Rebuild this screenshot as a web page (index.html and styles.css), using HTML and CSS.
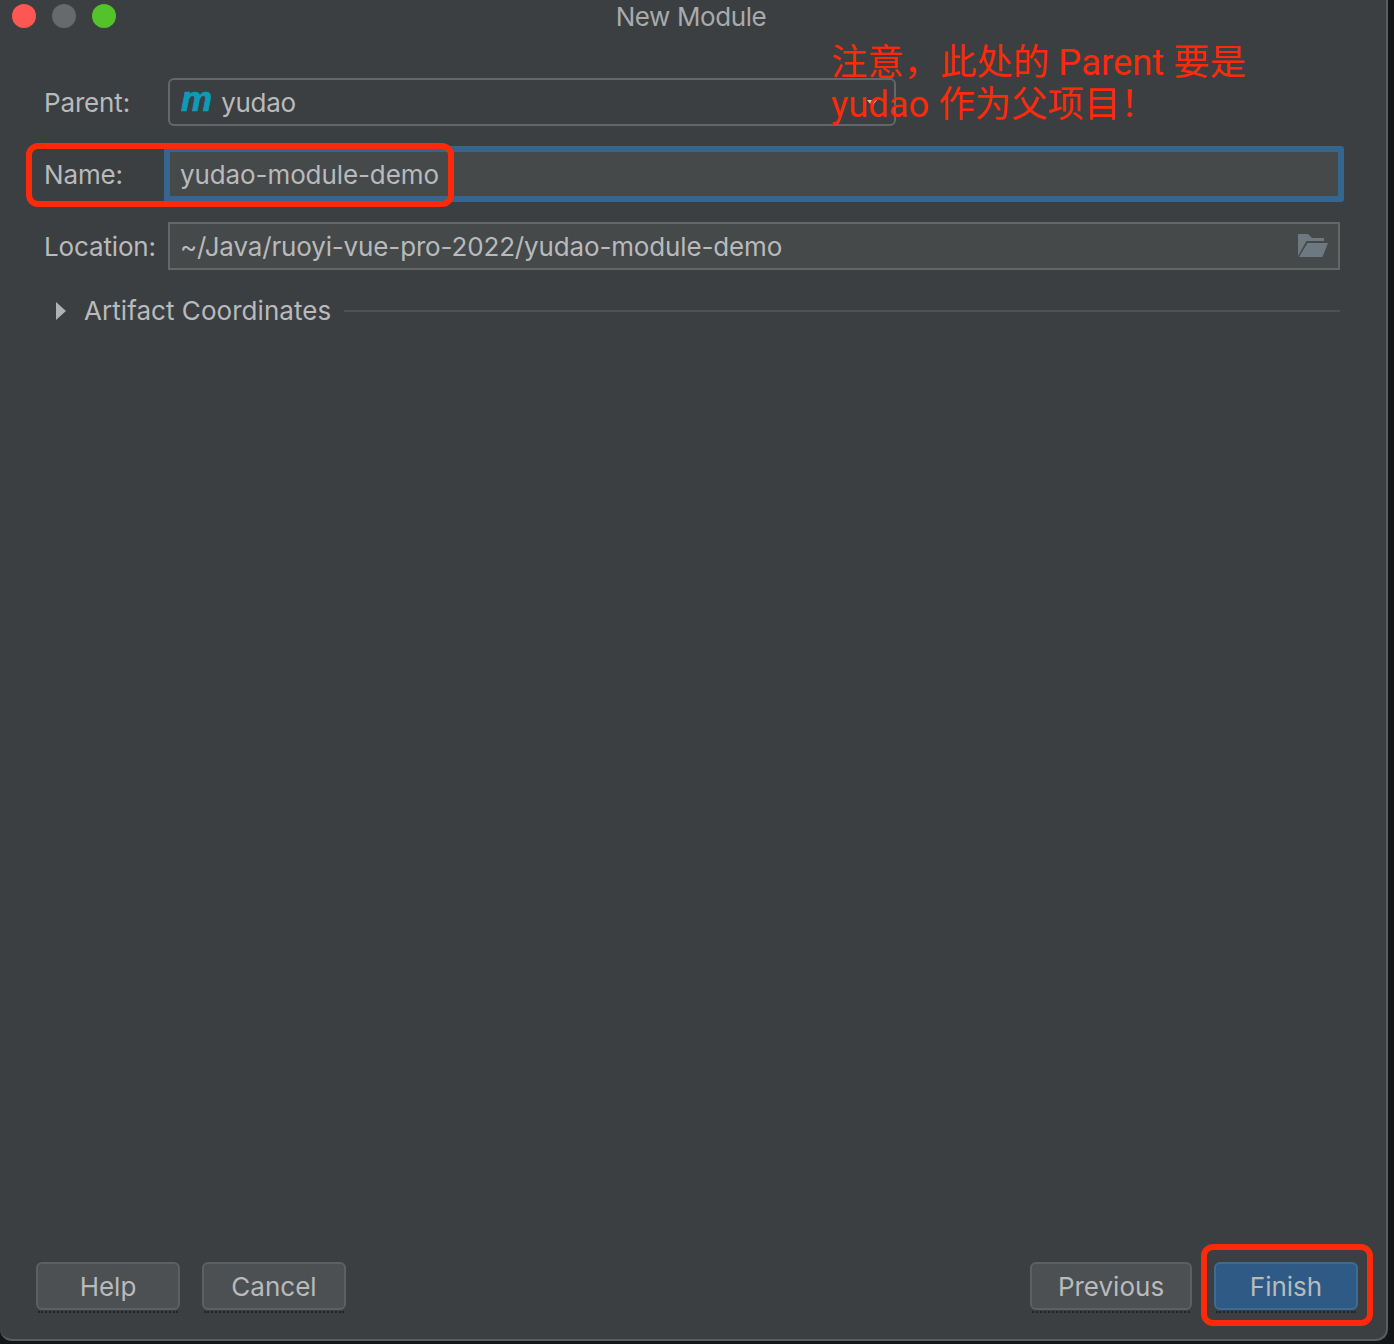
FILE: index.html
```html
<!DOCTYPE html>
<html lang="en">
<head>
<meta charset="UTF-8">
<title>New Module</title>
<link rel="stylesheet" href="styles.css">
</head>
<body>
<div class="window">
    <div class="titlebar">
        <div class="lights">
            <span class="light red"></span>
            <span class="light grey"></span>
            <span class="light green"></span>
        </div>
        <div class="title">New Module</div>
    </div>

    <div class="form">
        <div class="row">
            <label class="label">Parent:</label>
            <div class="select">
                <span class="maven">m</span>
                <span class="value tight">yudao</span>
                <svg class="caret" width="12" height="8" viewBox="0 0 12 8"><path d="M1 1h10L6 7z" fill="#c4c6c8"/></svg>
            </div>
        </div>
        <div class="row">
            <label class="label">Name:</label>
            <div class="field focused"><span class="value">yudao-module-demo</span></div>
        </div>
        <div class="row">
            <label class="label">Location:</label>
            <div class="field">
                <span class="value path">~/Java/ruoyi-vue-pro-2022/yudao-module-demo</span>
                <svg class="folder" width="30" height="24" viewBox="0 0 30 24"><path d="M0 0h10l4 4h12v3H8.500L0 22z" fill="#6e7880"/><path d="M9.500 9H30l-5.500 14H1z" fill="#6e7880"/></svg>
            </div>
        </div>
        <div class="section">
            <svg class="arrow" width="10" height="18" viewBox="0 0 10 18"><path d="M0 0l10 9-10 9z" fill="#afb1b3"/></svg>
            <span class="section-name">Artifact Coordinates</span>
            <span class="section-line"></span>
        </div>
    </div>

    <div class="footer">
        <div class="btn-group">
            <button class="btn">Help</button>
            <button class="btn">Cancel</button>
        </div>
        <div class="btn-group">
            <button class="btn prev">Previous</button>
            <button class="btn primary">Finish</button>
        </div>
    </div>

    <!-- annotations drawn on top of the screenshot -->
    <div class="note">注意，此处的 Parent 要是<br>yudao 作为父项目！</div>
    <div class="mark mark-name"></div>
    <div class="mark mark-finish"></div>
</div>
</body>
</html>
```

FILE: styles.css
```css
html, body {
    margin: 0;
    height: 100%;
    background: #141516;
}

body {
    font-family: Inter, "Noto Sans CJK SC", sans-serif;
    font-size: 26px;
    color: #b8babc;
    overflow: hidden;
}

.window {
    position: relative;
    box-sizing: border-box;
    width: 1388px;
    height: 1341px;
    background: #3c3f41;
    border-right: 2px solid #5a5c5e;
    border-bottom: 2px solid #5a5c5e;
    border-radius: 0 0 12px 12px;
    display: flex;
    flex-direction: column;
}

.titlebar {
    position: relative;
    height: 34px;
    display: flex;
    align-items: center;
    justify-content: center;
}

.lights {
    position: absolute;
    left: 12px;
    top: 4px;
    display: flex;
    gap: 16px;
}

.light {
    width: 24px;
    height: 24px;
    border-radius: 50%;
}

.red { background: #fc5753; }
.grey { background: #68696b; }
.green { background: #53c22b; }

.title {
    color: #a8aaac;
    letter-spacing: -0.4px;
    margin: -2px 0 0 -4px;
}

.form {
    flex-grow: 1;
    padding: 44px 46px 0 44px;
    display: flex;
    flex-direction: column;
    gap: 24px;
}

.row {
    display: flex;
    align-items: center;
    height: 48px;
}

.label {
    width: 124px;
    flex-shrink: 0;
    letter-spacing: -0.15px;
}

.select, .field {
    box-sizing: border-box;
    height: 48px;
    border: 2px solid #646667;
    padding: 0 10px;
    display: flex;
    align-items: center;
}

.select {
    width: 728px;
    border-radius: 6px;
    position: relative;
}

.maven {
    font-family: "Liberation Sans", sans-serif;
    font-style: italic;
    font-weight: bold;
    font-size: 35px;
    line-height: 1;
    color: #0d9bb8;
    -webkit-text-stroke: 0.7px #0d9bb8;
    margin: -7px 9px 0 1px;
}

.tight {
    letter-spacing: -0.3px;
}

.caret {
    position: absolute;
    right: 16px;
    top: 19px;
}

.field {
    flex-grow: 1;
    background: #45494a;
    justify-content: space-between;
}

.field.focused {
    border: 6px solid #34668f;
    border-radius: 3px;
    margin: 0 -4px;
    height: 56px;
    padding-left: 10px;
    letter-spacing: -0.1px;
}

.path {
    letter-spacing: -0.15px;
}

.folder {
    margin: 0;
}

.section {
    display: flex;
    align-items: center;
    height: 36px;
    margin-top: -1px;
    padding-left: 12px;
}

.arrow {
    margin-right: 18px;
}

.section-name {
    letter-spacing: 0.05px;
    margin-top: -2px;
}

.section-line {
    flex-grow: 1;
    height: 2px;
    background: #4f5153;
    margin-left: 13px;
}

.footer {
    display: flex;
    justify-content: space-between;
    padding: 0 28px 29px 36px;
}

.btn-group {
    display: flex;
    gap: 22px;
}

.btn {
    position: relative;
    box-sizing: border-box;
    width: 144px;
    height: 48px;
    font: inherit;
    color: #b8babc;
    background: #4c5052;
    border: 2px solid #5e6060;
    border-radius: 6px;
    padding: 0;
}

.btn::after {
    content: "";
    position: absolute;
    left: 0;
    right: 0;
    bottom: -5px;
    border-bottom: 2px dotted #232425;
}

.btn.prev {
    width: 162px;
}

.btn.primary {
    background: #2e5a85;
    border-color: #3a6c95;
}

.note {
    position: absolute;
    left: 831px;
    top: 42px;
    color: #fb2a0b;
    font-size: 36.4px;
    line-height: 42px;
    font-family: Roboto, "Noto Sans CJK SC", sans-serif;
    white-space: nowrap;
}

.mark {
    position: absolute;
    box-sizing: border-box;
    border: 6px solid #fb2a0b;
    border-radius: 12px;
}

.mark-name {
    left: 26px;
    top: 143px;
    width: 428px;
    height: 64px;
}

.mark-finish {
    left: 1201px;
    top: 1244px;
    width: 172px;
    height: 82px;
}
```
